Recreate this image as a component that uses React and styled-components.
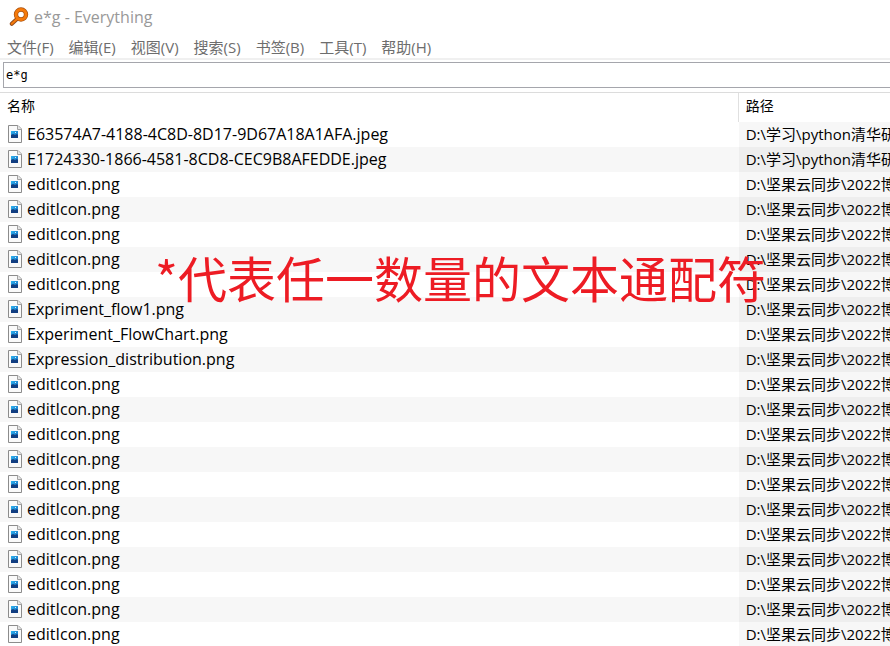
import { useState } from 'react';
import styled, { createGlobalStyle } from 'styled-components';

const GlobalStyle = createGlobalStyle`
  *, *::before, *::after { box-sizing: border-box; }
  body {
    margin: 0;
    background: #ffffff;
    color: #000000;
    font-family: "Open Sans", "Noto Sans CJK SC", sans-serif;
    font-size: 15px;
    overflow: hidden;
  }
`;

const Window = styled.div`
  height: 100vh;
  overflow: hidden;
`;

const TitleBar = styled.header`
  display: flex;
  align-items: center;
  gap: 4px;
  height: 33px;
  padding-left: 9px;
`;

const Title = styled.h1`
  margin: 0;
  font-size: 16px;
  font-weight: 400;
  line-height: 20px;
  color: #999999;
`;

const Menu = styled.nav`
  display: flex;
  align-items: center;
  gap: 15px;
  height: 27px;
  padding-left: 7px;
  border-bottom: 2px solid #f0f0f0;
`;

const MenuButton = styled.button`
  padding: 2px 0 0;
  border: 0;
  background: none;
  font-family: inherit;
  font-size: 15px;
  line-height: 24px;
  color: #6d6d6d;
  white-space: nowrap;
`;

const SearchBar = styled.div`
  padding: 2px 0 4px 3px;
  border-bottom: 1px solid #dcdcdc;
`;

const SearchInput = styled.input`
  display: block;
  width: 100%;
  height: 26px;
  padding: 0 2px;
  border: 1px solid #a5a6ac;
  border-right: 0;
  border-radius: 0;
  outline: 0;
  background: #ffffff;
  color: #000000;
  font-family: "DejaVu Sans Mono", monospace;
  font-size: 12px;
`;

const Results = styled.main`
  position: relative;
`;

const Table = styled.table`
  width: 100%;
  table-layout: fixed;
  border-collapse: separate;
  border-spacing: 0;
`;

const HeadCell = styled.th`
  width: ${({ $width }) => $width};
  height: 29px;
  padding: 0 7px 4px;
  border-right: ${({ $divided }) => ($divided ? '1px solid #e0e0e0' : '0')};
  font-size: 14px;
  font-weight: 400;
  line-height: 24px;
  text-align: left;
`;

const Row = styled.tr`
  &:nth-child(even) { background: #f7f7f7; }
`;

const Cell = styled.td`
  height: 25px;
  padding: 0 7px 2px;
  line-height: 22px;
  white-space: nowrap;
  overflow: hidden;
`;

const PathCell = styled(Cell)`
  padding-right: 0;
  background: #f7f7f7;

  ${Row}:nth-child(even) & { background: #eeeeee; }
`;

const FileName = styled.span`
  display: flex;
  align-items: center;
  gap: 4px;
  font-size: 16px;
`;

const Note = styled.p`
  position: absolute;
  top: 148px;
  left: 155px;
  margin: 0;
  font-family: "Noto Sans CJK SC", sans-serif;
  font-size: 49px;
  line-height: 72px;
  color: #ed1c24;
  white-space: nowrap;
  pointer-events: none;
`;

const menuItems = ['文件(F)', '编辑(E)', '视图(V)', '搜索(S)', '书签(B)', '工具(T)', '帮助(H)'];

const studyPath = 'D:\\学习\\python清华研';
const syncPath = 'D:\\坚果云同步\\2022博';

const files = [
  { name: 'E63574A7-4188-4C8D-8D17-9D67A18A1AFA.jpeg', path: studyPath },
  { name: 'E1724330-1866-4581-8CD8-CEC9B8AFEDDE.jpeg', path: studyPath },
  ...Array(5).fill({ name: 'editIcon.png', path: syncPath }),
  { name: 'Expriment_flow1.png', path: syncPath },
  { name: 'Experiment_FlowChart.png', path: syncPath },
  { name: 'Expression_distribution.png', path: syncPath },
  ...Array(11).fill({ name: 'editIcon.png', path: syncPath }),
];

function SearchLogo() {
  return (
    <svg width="21" height="20" viewBox="0 0 21 20" fill="none" aria-hidden="true">
      <path d="M8.5 11.5 2.8 16.8" stroke="#8f4a1c" strokeWidth="4" strokeLinecap="round" />
      <circle cx="12" cy="7.5" r="5" stroke="#a8500f" strokeWidth="4.4" />
      <path d="M8.5 11.5 2.8 16.8" stroke="#f57a0a" strokeWidth="2.2" strokeLinecap="round" />
      <circle cx="12" cy="7.5" r="5" stroke="#f57a0a" strokeWidth="3" />
    </svg>
  );
}

function ImageFileIcon() {
  return (
    <svg width="16" height="18" viewBox="0 0 16 18" aria-hidden="true">
      <defs>
        <linearGradient id="sky" x1="0" y1="0" x2="1" y2="1">
          <stop offset="0" stopColor="#2cb4f0" />
          <stop offset="1" stopColor="#1768bd" />
        </linearGradient>
      </defs>
      <path d="M1.5.5h9.5l3.5 3.5v13.5h-13z" fill="#fafafa" stroke="#8c8c8c" />
      <path d="M10.5.5v4h4" fill="#e6e6e6" stroke="#a3a3a3" />
      <path d="M4 6h7v7H4z" fill="url(#sky)" />
      <path d="M4 10l2-1 2 1 2-1 1 1v3H4z" fill="#123f82" />
      <path d="M8 7h1v1H8z" fill="#d8f2ff" />
    </svg>
  );
}

export default function App() {
  const [query, setQuery] = useState('e*g');

  return (
    <Window>
      <GlobalStyle />
      <TitleBar>
        <SearchLogo />
        <Title>{query} - Everything</Title>
      </TitleBar>
      <Menu>
        {menuItems.map((item) => (
          <MenuButton key={item} type="button">{item}</MenuButton>
        ))}
      </Menu>
      <SearchBar>
        <SearchInput
          aria-label="搜索"
          value={query}
          onChange={(e) => setQuery(e.target.value)}
        />
      </SearchBar>
      <Results>
        <Table>
          <thead>
            <tr>
              <HeadCell $width="83%" $divided>名称</HeadCell>
              <HeadCell>路径</HeadCell>
            </tr>
          </thead>
          <tbody>
            {files.map((file, i) => (
              <Row key={i}>
                <Cell>
                  <FileName>
                    <ImageFileIcon />
                    {file.name}
                  </FileName>
                </Cell>
                <PathCell>{file.path}</PathCell>
              </Row>
            ))}
          </tbody>
        </Table>
        <Note>*代表任一数量的文本通配符</Note>
      </Results>
    </Window>
  );
}
